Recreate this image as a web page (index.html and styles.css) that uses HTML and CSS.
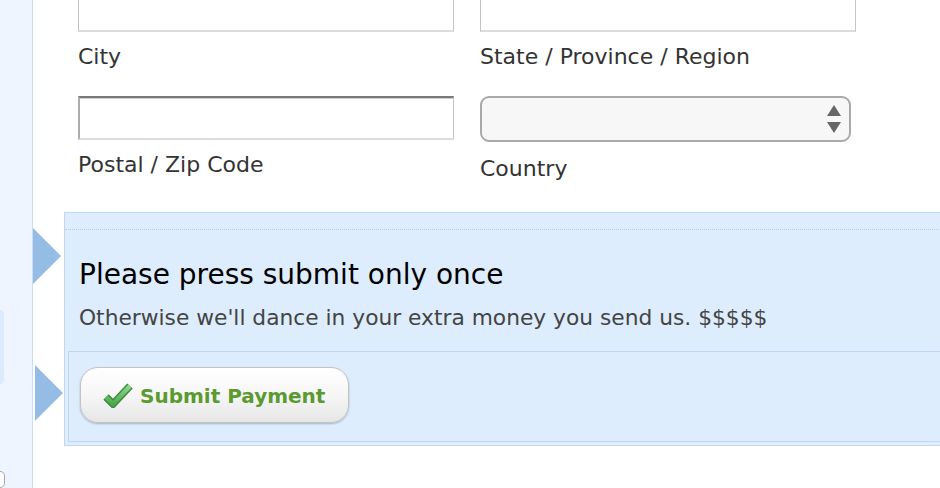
FILE: index.html
```html
<!DOCTYPE html>
<html lang="en">
<head>
<meta charset="utf-8">
<title>Payment</title>
<link rel="stylesheet" href="styles.css">
</head>
<body>
<aside class="sidebar">
  <div class="side-tab"></div>
  <div class="side-knob"></div>
</aside>
<main class="main">
  <div class="form-grid">
    <div class="field">
      <input class="text-input" type="text">
      <label class="field-label">City</label>
    </div>
    <div class="field">
      <input class="text-input" type="text">
      <label class="field-label">State / Province / Region</label>
    </div>
    <div class="field">
      <input class="text-input text-input--focus" type="text">
      <label class="field-label">Postal / Zip Code</label>
    </div>
    <div class="field">
      <div class="select">
        <svg class="select-arrows" width="14" height="28" viewBox="0 0 14 28"><polygon points="7,0 14,11 0,11" fill="#666"/><polygon points="0,17 14,17 7,28" fill="#666"/></svg>
      </div>
      <label class="field-label field-label--select">Country</label>
    </div>
  </div>
  <section class="submit-box">
    <div class="notice">
      <h2 class="notice-title">Please press submit only once</h2>
      <p class="notice-text">Otherwise we'll dance in your extra money you send us. $$$$$</p>
    </div>
    <div class="actions">
      <button class="btn-submit" type="button">
        <svg class="check" width="30" height="26" viewBox="0 0 30 26">
          <defs><linearGradient id="cg" x1="0" y1="0" x2="0" y2="1"><stop offset="0" stop-color="#8fd98f"/><stop offset="1" stop-color="#4aa84a"/></linearGradient></defs>
          <polyline points="3,15 10,22 27,4" fill="none" stroke="#3d8a3d" stroke-width="7.5" stroke-linejoin="miter"/>
          <polyline points="3,15 10,22 27,4" fill="none" stroke="url(#cg)" stroke-width="4.5" stroke-linejoin="miter"/>
        </svg>
        <span class="btn-label">Submit Payment</span>
      </button>
    </div>
  </section>
</main>
</body>
</html>
```
FILE: styles.css
```css
html, body {
  margin: 0;
  padding: 0;
  height: 488px;
  overflow: hidden;
  background: #ffffff;
}
body {
  display: flex;
  font-family: "DejaVu Sans", Verdana, sans-serif;
  color: #333;
}
.sidebar {
  width: 33px;
  flex: none;
  background: #eef5fe;
  border-right: 1px solid #c9dcf3;
  display: flex;
  flex-direction: column;
  padding-top: 310px;
  box-sizing: border-box;
}
.side-tab {
  width: 4px;
  height: 80px;
  background: #dbeafc;
  border-radius: 0 8px 8px 0;
}
.side-knob {
  margin-top: 87px;
  width: 4px;
  height: 16px;
  background: #fff;
  border: 1px solid #a8a8a8;
  border-left: none;
  border-radius: 0 8px 8px 0;
}
.main {
  flex: 1;
  padding-left: 31px;
  overflow: hidden;
}
.form-grid {
  margin-top: -12px;
  padding-left: 14px;
  display: grid;
  grid-template-columns: 376px 376px;
  column-gap: 26px;
  row-gap: 26px;
  align-items: start;
}
.field {
  display: flex;
  flex-direction: column;
}
.text-input {
  box-sizing: border-box;
  width: 376px;
  height: 44px;
  margin: 0;
  padding: 0 6px;
  background: #fff;
  border: 1px solid;
  border-color: #c4c4c4 #c6c6c6 #dcdcdc #c2c2c2;
  border-bottom-width: 2px;
  outline: none;
}
.text-input--focus {
  border-color: #7a7a7a #c4c4c4 #dcdcdc #adadad;
  border-top-width: 2px;
  border-left-width: 2px;
  box-shadow: inset 0 1px 0 #d0d0d0;
}
.field-label {
  margin-top: 12px;
  font-size: 22px;
  line-height: 26px;
  color: #333;
}
.field-label--select {
  margin-top: 14px;
}
.select {
  box-sizing: border-box;
  width: 371px;
  height: 46px;
  border: 2px solid #a9a9a9;
  border-radius: 9px;
  background: #f7f7f7;
  display: flex;
  align-items: center;
  justify-content: flex-end;
  padding-right: 8px;
}
.submit-box {
  margin-top: 30px;
  margin-right: -20px;
  border: 1px solid #c3d6ef;
  background: #ddedfd;
}
.notice {
  position: relative;
  margin-top: 16px;
  border-top: 1px dotted #c6c9cc;
  padding: 28px 14px 20px 14px;
}
.notice::before {
  content: "";
  position: absolute;
  left: -32px;
  top: -2px;
  border-left: 28px solid #95bce5;
  border-top: 28px solid transparent;
  border-bottom: 28px solid transparent;
}
.notice-title {
  margin: 0 0 13px 0;
  font-size: 28px;
  line-height: 34px;
  font-weight: normal;
  color: #000;
}
.notice-text {
  margin: 0;
  font-size: 21.75px;
  line-height: 26px;
  color: #444;
}
.actions {
  position: relative;
  margin: 0 0 3px 3px;
  border: 1px solid #c3d6ef;
  border-right: none;
  padding: 15px 0 18px 11px;
}
.actions::before {
  content: "";
  position: absolute;
  left: -34px;
  top: 13px;
  border-left: 28px solid #95bce5;
  border-top: 28px solid transparent;
  border-bottom: 28px solid transparent;
}
.btn-submit {
  box-sizing: border-box;
  height: 56px;
  display: inline-flex;
  align-items: center;
  gap: 7px;
  padding: 2px 23px 0 22px;
  border: 1px solid #c3c3c3;
  border-radius: 18px;
  background: linear-gradient(#ffffff, #f6f6f6 50%, #e6e6e6);
  box-shadow: 0 1px 2px rgba(0, 0, 0, 0.25);
  font-family: "DejaVu Sans", Verdana, sans-serif;
  font-weight: bold;
  font-size: 20px;
  line-height: 24px;
  color: #5a9a2f;
  cursor: pointer;
}
.check {
  flex: none;
  margin-top: -3px;
}
```
